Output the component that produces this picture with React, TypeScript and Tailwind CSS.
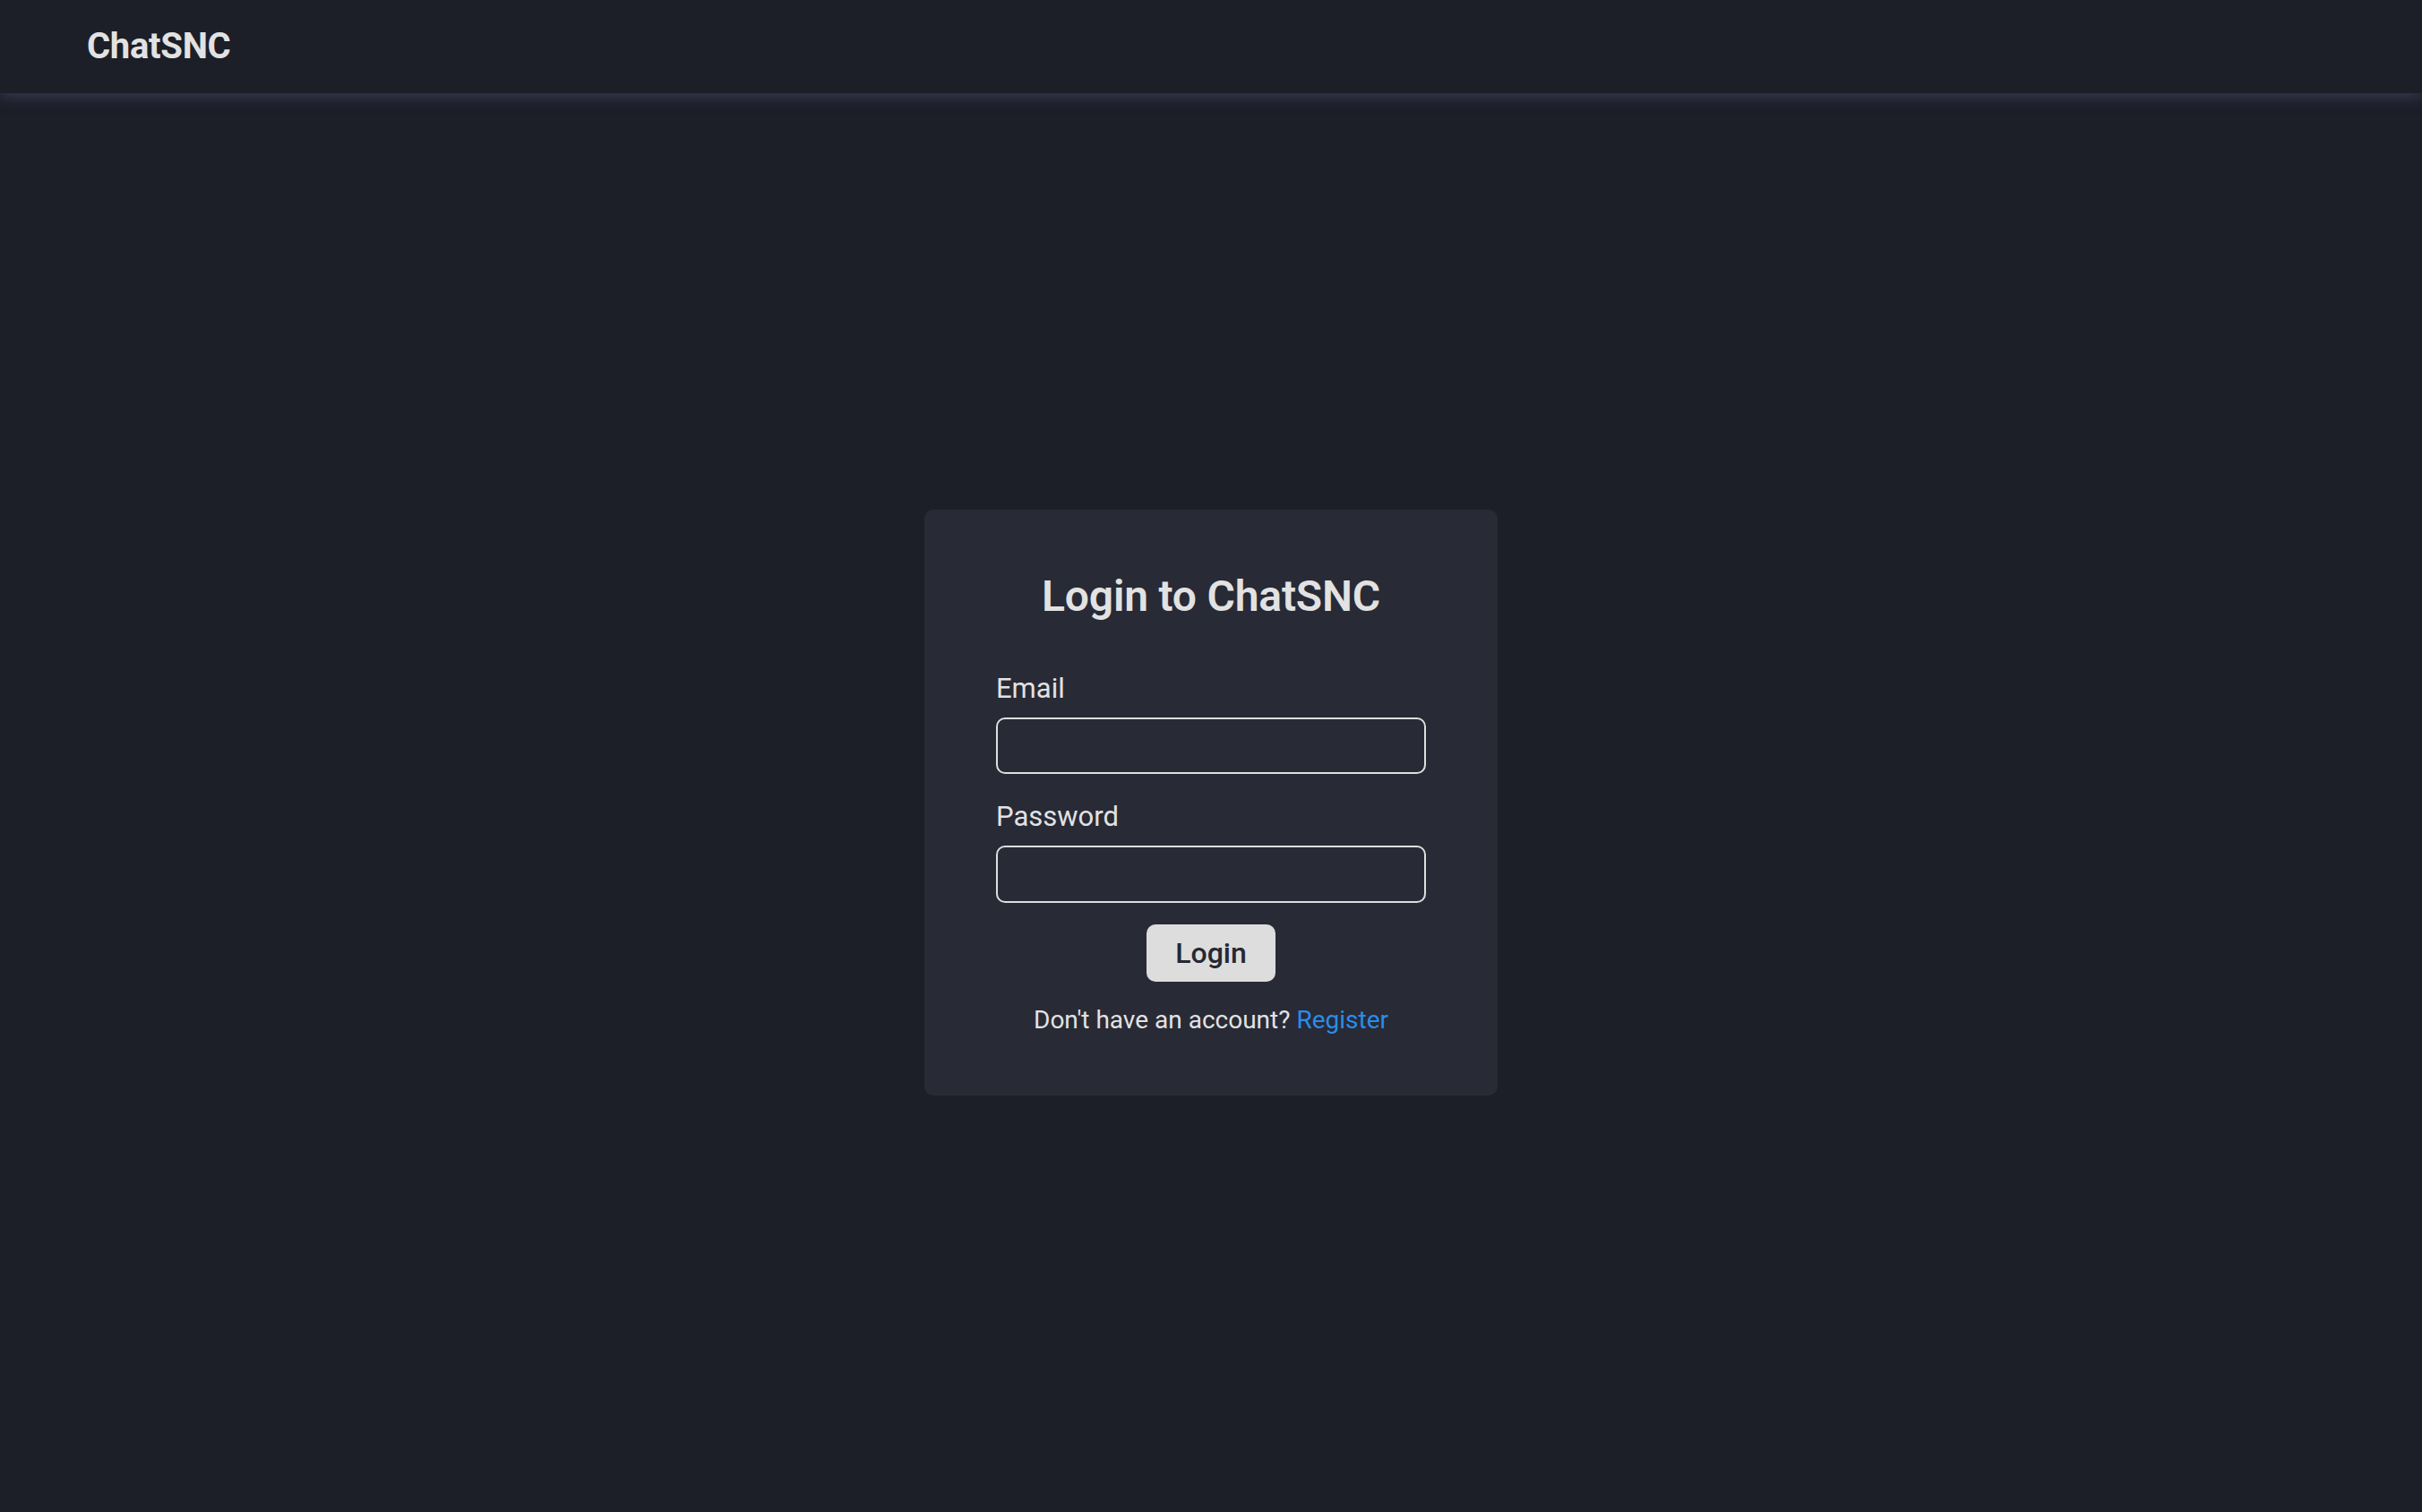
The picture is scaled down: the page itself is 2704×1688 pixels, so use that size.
import React, { useState } from 'react';

const App: React.FC = () => {
  const [email, setEmail] = useState('');
  const [password, setPassword] = useState('');

  return (
    <div className="min-h-screen flex flex-col bg-[#1c1f28] text-[#e0e0e0] font-['Roboto',_'Liberation_Sans',_sans-serif]">
      {/* Top bar */}
      <header className="relative z-10 h-[104px] shrink-0 flex items-center px-[97px] bg-[#1c1f28] shadow-[0_4px_14px_rgba(62,62,92,0.8)]">
        <h1 className="text-[40px] font-bold leading-none tracking-[-0.3px] text-[#e2e2e2]">ChatSNC</h1>
      </header>

      {/* Login card */}
      <main className="flex-1 flex items-center justify-center">
        <div className="w-[640px] bg-[#282a36] rounded-[10px] px-[80px] pt-[69px] pb-[68px]">
          <h2 className="text-center text-[48px] leading-[56px] font-semibold tracking-[-0.2px] text-[#e2e2e2]">Login to ChatSNC</h2>

          <form className="flex flex-col mt-[57px]" onSubmit={(e) => e.preventDefault()}>
            <label className="text-[31px] leading-[36px] text-[#e2e2e2]">Email</label>
            <input
              type="email"
              value={email}
              onChange={(e) => setEmail(e.target.value)}
              className="mt-[14px] h-[63px] w-full rounded-[10px] border-2 border-[#dedede] bg-transparent px-3 text-[28px] text-white outline-none"
            />

            <label className="mt-[30px] text-[31px] leading-[36px] text-[#e2e2e2]">Password</label>
            <input
              type="password"
              value={password}
              onChange={(e) => setPassword(e.target.value)}
              className="mt-[14px] h-[64px] w-full rounded-[10px] border-2 border-[#dedede] bg-transparent px-3 text-[28px] text-white outline-none"
            />

            <button
              type="submit"
              className="mt-[24px] self-center h-[64px] w-[144px] rounded-[10px] bg-[#dddddd] text-[32px] font-medium text-[#262833]"
            >
              Login
            </button>
          </form>

          <p className="mt-[26px] text-center text-[28px] leading-[33px] text-[#e2e2e2]">
            Don't have an account? <a href="#" className="text-[#2a8de8]">Register</a>
          </p>
        </div>
      </main>
    </div>
  );
};

export default App;
